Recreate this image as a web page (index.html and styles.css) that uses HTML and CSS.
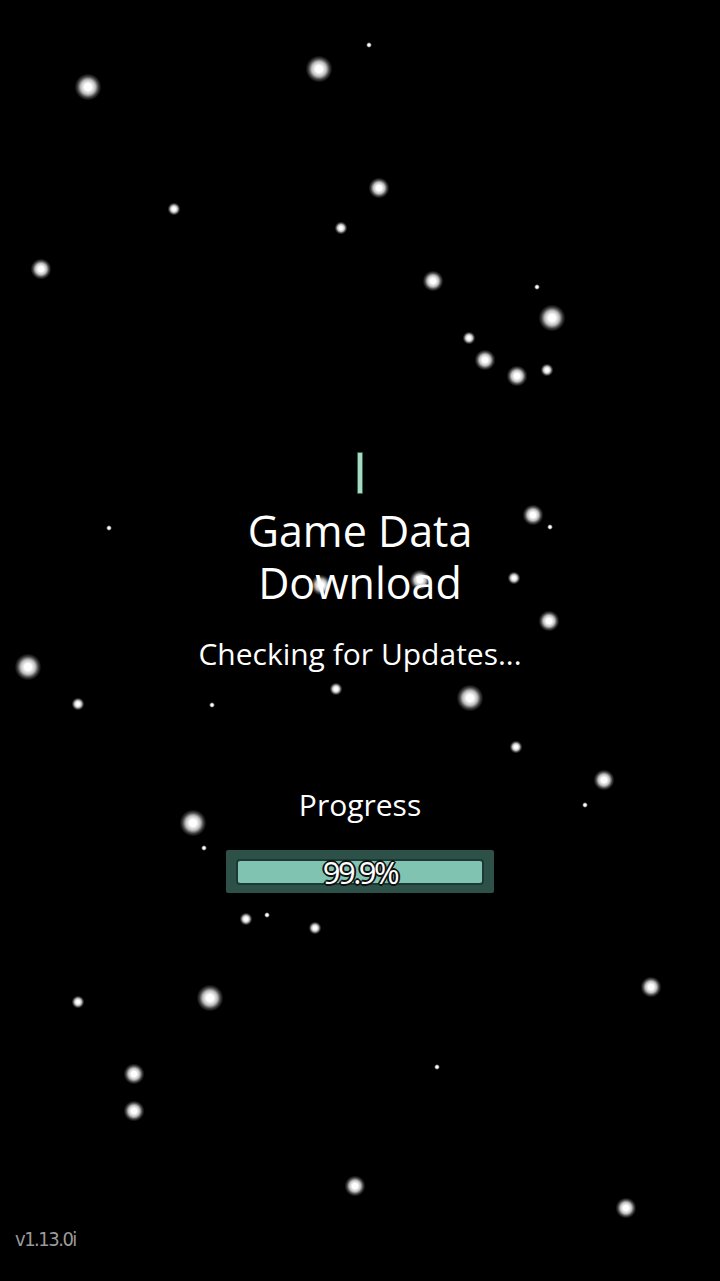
FILE: index.html
```html
<!DOCTYPE html>
<html lang="en">
<head>
    <meta charset="UTF-8">
    <meta name="viewport" content="width=device-width, initial-scale=1.0">
    <title>Game Data Download</title>
    <link rel="stylesheet" href="styles.css">
</head>
<body>

    <!-- Star field -->
    <div class="stars">
        <span class="star lg" style="left:88px;top:87px"></span>
        <span class="star lg" style="left:319px;top:69px"></span>
        <span class="star xs" style="left:369px;top:45px"></span>
        <span class="star md" style="left:379px;top:188px"></span>
        <span class="star sm" style="left:174px;top:209px"></span>
        <span class="star sm" style="left:341px;top:228px"></span>
        <span class="star md" style="left:41px;top:269px"></span>
        <span class="star md" style="left:433px;top:281px"></span>
        <span class="star xs" style="left:537px;top:287px"></span>
        <span class="star lg" style="left:552px;top:318px"></span>
        <span class="star sm" style="left:469px;top:338px"></span>
        <span class="star md" style="left:485px;top:360px"></span>
        <span class="star md" style="left:517px;top:376px"></span>
        <span class="star sm" style="left:547px;top:370px"></span>
        <span class="star md" style="left:533px;top:515px"></span>
        <span class="star xs" style="left:550px;top:527px"></span>
        <span class="star xs" style="left:109px;top:528px"></span>
        <span class="star md" style="left:321px;top:585px"></span>
        <span class="star md" style="left:420px;top:580px"></span>
        <span class="star sm" style="left:514px;top:578px"></span>
        <span class="star md" style="left:549px;top:621px"></span>
        <span class="star lg" style="left:28px;top:667px"></span>
        <span class="star sm" style="left:336px;top:689px"></span>
        <span class="star lg" style="left:470px;top:698px"></span>
        <span class="star sm" style="left:78px;top:704px"></span>
        <span class="star xs" style="left:212px;top:705px"></span>
        <span class="star sm" style="left:516px;top:747px"></span>
        <span class="star md" style="left:604px;top:780px"></span>
        <span class="star xs" style="left:585px;top:805px"></span>
        <span class="star lg" style="left:193px;top:823px"></span>
        <span class="star xs" style="left:204px;top:848px"></span>
        <span class="star sm" style="left:246px;top:919px"></span>
        <span class="star xs" style="left:267px;top:915px"></span>
        <span class="star sm" style="left:315px;top:928px"></span>
        <span class="star md" style="left:651px;top:987px"></span>
        <span class="star sm" style="left:78px;top:1002px"></span>
        <span class="star lg" style="left:210px;top:998px"></span>
        <span class="star xs" style="left:437px;top:1067px"></span>
        <span class="star md" style="left:134px;top:1074px"></span>
        <span class="star md" style="left:134px;top:1111px"></span>
        <span class="star md" style="left:355px;top:1186px"></span>
        <span class="star md" style="left:626px;top:1208px"></span>
    </div>

    <!-- Loader -->
    <main class="loader">
        <div class="spinner"></div>
        <h1 class="title">Game Data<br>Download</h1>
        <p class="status">Checking for Updates...</p>

        <p class="progress-label">Progress</p>
        <div class="progress">
            <div class="progress-track">
                <div class="progress-fill" style="width:100%"></div>
            </div>
            <span class="progress-text">99.9%</span>
        </div>
    </main>

    <div class="version">v1.13.0i</div>
</body>
</html>
```

FILE: styles.css
```css
/* Page */
body {
    margin: 0;
    width: 720px;
    height: 1281px;
    background: #000;
    color: #fff;
    font-family: "Open Sans", "Noto Sans", sans-serif;
    position: relative;
    overflow: hidden;
}

/* Stars */
.stars {
    position: absolute;
    inset: 0;
    z-index: 2;
    pointer-events: none;
}

.star {
    position: absolute;
    border-radius: 50%;
    transform: translate(-50%, -50%);
    background: radial-gradient(circle, #fff 0%, #fff 18%, rgba(255,255,255,0.75) 38%, rgba(255,255,255,0.25) 55%, rgba(255,255,255,0) 70%);
}

.star.lg { width: 27px; height: 27px; }
.star.md { width: 21px; height: 21px; }
.star.sm { width: 13px; height: 13px; }
.star.xs { width: 6px; height: 6px; }

/* Loader block */
.loader {
    display: flex;
    flex-direction: column;
    align-items: center;
    padding-top: 452px;
    position: relative;
    z-index: 1;
}

.spinner {
    width: 4px;
    height: 40px;
    background: #a9d9c4;
    border: 1px solid #2c6a4f;
    border-radius: 1px;
}

.title {
    margin: 11px 0 0;
    font-size: 43px;
    font-weight: 400;
    line-height: 52px;
    text-align: center;
}

.status {
    margin: 25px 0 0;
    font-size: 30px;
    line-height: 40px;
}

.progress-label {
    margin: 111px 0 0;
    font-size: 30px;
    line-height: 40px;
}

/* Progress bar */
.progress {
    position: relative;
    margin-top: 25px;
    width: 268px;
    height: 43px;
    box-sizing: border-box;
    padding: 9px 10px 8px;
    background: #2d5049;
    border-radius: 2px;
}

.progress-track {
    height: 100%;
    box-sizing: border-box;
    border: 2px solid #1c3a34;
    border-radius: 4px;
    background: #20403a;
    overflow: hidden;
}

.progress-fill {
    height: 100%;
    background: #80c3b0;
}

.progress-text {
    position: absolute;
    inset: 0;
    display: flex;
    align-items: center;
    justify-content: center;
    font-size: 31px;
    letter-spacing: -2.5px;
    color: #fff;
    text-shadow:
        -2px 0 #111, 2px 0 #111, 0 -2px #111, 0 2px #111,
        -1px -1px #111, 1px -1px #111, -1px 1px #111, 1px 1px #111;
}

/* Version */
.version {
    position: absolute;
    left: 15px;
    bottom: 30px;
    font-family: "DejaVu Sans Condensed", "Roboto", sans-serif;
    font-size: 20px;
    letter-spacing: -1.5px;
    color: #9a9a9a;
}
```
